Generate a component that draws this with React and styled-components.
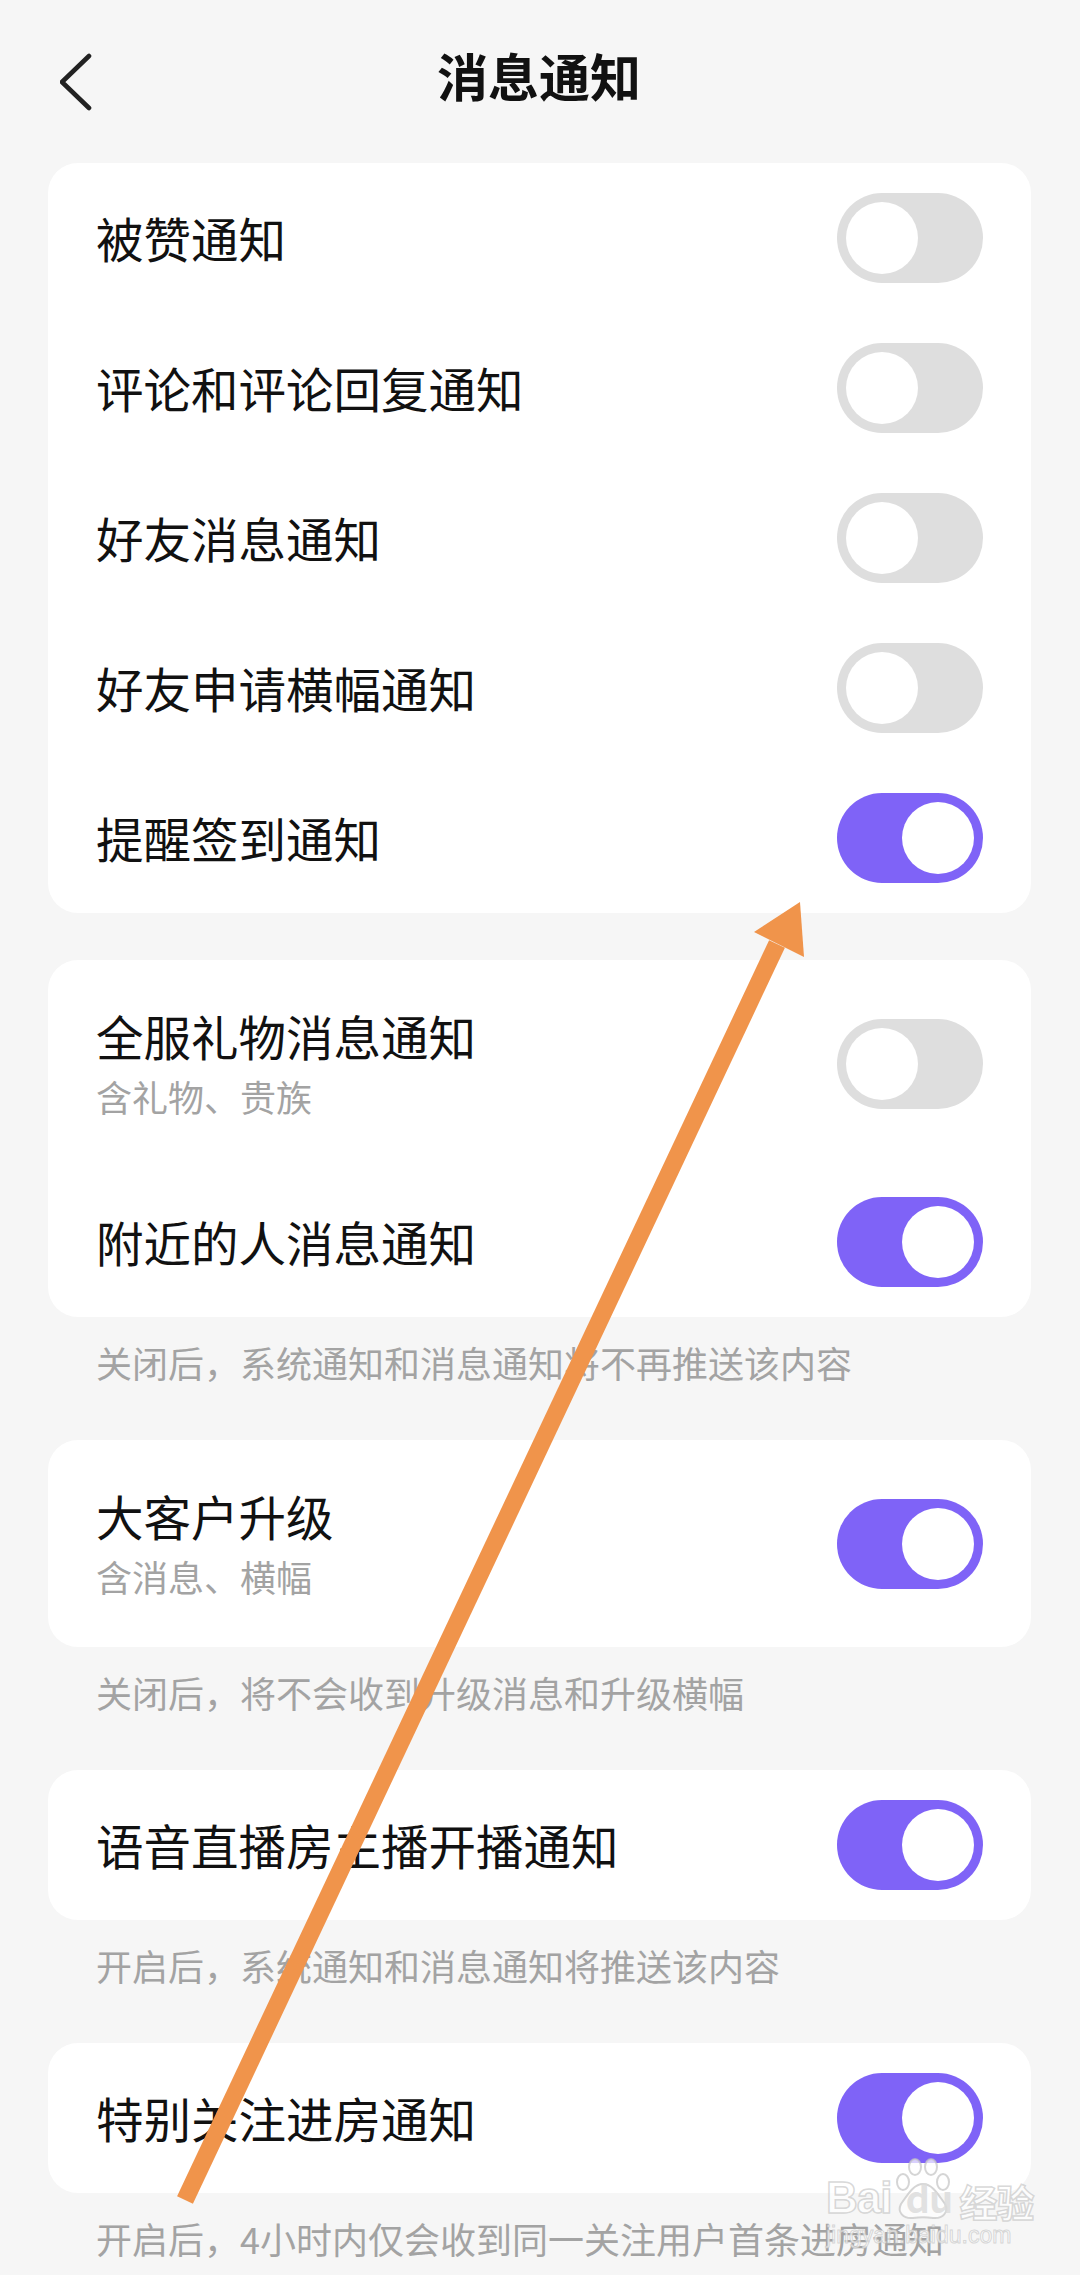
import React from 'react'
import styled, { createGlobalStyle } from 'styled-components'

const GlobalStyle = createGlobalStyle`
  html, body {
    margin: 0;
    padding: 0;
    background: #f6f6f6;
  }
  body {
    font-family: "Noto Sans CJK SC", "Noto Sans", sans-serif;
    -webkit-font-smoothing: antialiased;
  }
`

const sections = [
  {
    rows: [
      { title: '被赞通知', on: false },
      { title: '评论和评论回复通知', on: false },
      { title: '好友消息通知', on: false },
      { title: '好友申请横幅通知', on: false },
      { title: '提醒签到通知', on: true },
    ],
  },
  {
    rows: [
      { title: '全服礼物消息通知', sub: '含礼物、贵族', on: false },
      { title: '附近的人消息通知', on: true },
    ],
    note: '关闭后，系统通知和消息通知将不再推送该内容',
  },
  {
    rows: [{ title: '大客户升级', sub: '含消息、横幅', on: true }],
    note: '关闭后，将不会收到升级消息和升级横幅',
  },
  {
    rows: [{ title: '语音直播房主播开播通知', on: true }],
    note: '开启后，系统通知和消息通知将推送该内容',
  },
  {
    rows: [{ title: '特别关注进房通知', on: true }],
    note: '开启后，4小时内仅会收到同一关注用户首条进房通知',
  },
]

function App() {
  return (
    <Page>
      <GlobalStyle />
      <Header>
        <BackButton aria-label="返回">
          <svg width="40" height="62" viewBox="0 0 40 62">
            <polyline points="29,4 2,30 29,56" fill="none" stroke="#222" strokeWidth="4.6" strokeLinecap="round" strokeLinejoin="round" />
          </svg>
        </BackButton>
        <Title>消息通知</Title>
      </Header>

      <List>
        {sections.map((s, i) => (
          <Section key={i}>
            <Card>
              {s.rows.map((r) => (
                <Row key={r.title} $tall={!!r.sub}>
                  <Label>
                    <RowTitle>{r.title}</RowTitle>
                    {r.sub && <RowSub>{r.sub}</RowSub>}
                  </Label>
                  <Toggle $on={r.on}>
                    <Knob />
                  </Toggle>
                </Row>
              ))}
            </Card>
            {s.note && <Note>{s.note}</Note>}
          </Section>
        ))}
      </List>

      {/* annotation drawn over the screenshot */}
      <Overlay viewBox="0 0 1080 2275" width="1080" height="2275">
        <line x1="185" y1="2200" x2="777" y2="944" stroke="#f0944b" strokeWidth="17.5" />
        <polygon points="800,902 754,932 804,957" fill="#f0944b" />
      </Overlay>

      <Watermark>
        <MarkLine>
          <span>Bai</span>
          <Paw>
            <svg width="60" height="62" viewBox="0 0 60 62">
              <g fill="rgba(255,255,255,0.7)" stroke="rgba(195,195,195,0.7)" strokeWidth="2">
                <ellipse cx="10" cy="24" rx="6" ry="8" />
                <ellipse cx="22" cy="9" rx="6" ry="8" />
                <ellipse cx="38" cy="9" rx="6" ry="8" />
                <ellipse cx="50" cy="24" rx="6" ry="8" />
                <path d="M30 26 C20 26 14 38 8 46 C4 54 10 61 20 60 C26 59 34 59 40 60 C50 61 56 54 52 46 C46 38 40 26 30 26 Z" />
              </g>
            </svg>
            <PawText>du</PawText>
          </Paw>
          <span>经验</span>
        </MarkLine>
        <MarkUrl>jingyan.baidu.com</MarkUrl>
      </Watermark>
    </Page>
  )
}

export default App

const Page = styled.div`
  position: relative;
  width: 1080px;
  min-height: 2275px;
  background: #f6f6f6;
  overflow: hidden;
`

const Header = styled.header`
  height: 150px;
  display: flex;
  align-items: center;
  justify-content: center;
  position: relative;
`

const BackButton = styled.button`
  position: absolute;
  left: 60px;
  top: 52px;
  border: none;
  background: none;
  padding: 0;
  display: flex;
`

const Title = styled.h1`
  margin: 0 0 0 -2px;
  font-size: 51px;
  font-weight: 700;
  color: #111;
  line-height: 1;
`

const List = styled.main`
  padding: 13px 49px 0 48px;
  display: flex;
  flex-direction: column;
  gap: 47px;
`

const Section = styled.section`
  display: flex;
  flex-direction: column;
`

const Card = styled.div`
  background: #fff;
  border-radius: 30px;
  padding: 0 48px;
  display: flex;
  flex-direction: column;
`

const Row = styled.div`
  height: ${(p) => (p.$tall ? '207px' : '150px')};
  display: flex;
  align-items: center;
  justify-content: space-between;
`

const Label = styled.div`
  display: flex;
  flex-direction: column;
  gap: 9px;
`

const RowTitle = styled.div`
  font-size: 47.5px;
  line-height: 56px;
  color: #111;
`

const RowSub = styled.div`
  font-size: 36px;
  line-height: 46px;
  color: #a3a3a3;
`

const Toggle = styled.div`
  width: 146px;
  height: 90px;
  box-sizing: border-box;
  padding: 9px;
  border-radius: 45px;
  background: ${(p) => (p.$on ? '#7f63f7' : '#dedede')};
  display: flex;
  justify-content: ${(p) => (p.$on ? 'flex-end' : 'flex-start')};
  align-items: center;
`

const Knob = styled.div`
  width: 72px;
  height: 72px;
  border-radius: 50%;
  background: #fff;
`

const Note = styled.p`
  margin: 0;
  padding: 20px 48px 6px;
  font-size: 36px;
  line-height: 50px;
  color: #a3a3a3;
`

const Overlay = styled.svg`
  position: absolute;
  left: 0;
  top: 0;
  pointer-events: none;
`

const Watermark = styled.div`
  position: absolute;
  left: 826px;
  top: 2158px;
  display: flex;
  flex-direction: column;
  align-items: flex-start;
  pointer-events: none;
  font-family: "Liberation Sans", Arial, sans-serif;
  color: rgba(255, 255, 255, 0.7);
  -webkit-text-stroke: 1.5px rgba(195, 195, 195, 0.65);
`

const MarkLine = styled.div`
  display: flex;
  align-items: flex-end;
  font-size: 44px;
  font-weight: 700;
  line-height: 1;
  letter-spacing: -1px;
  span {
    display: block;
  }
  span:last-child {
    font-family: "Noto Sans CJK SC", sans-serif;
    font-size: 38px;
    margin-left: 4px;
  }
`

const Paw = styled.div`
  position: relative;
  width: 60px;
  height: 62px;
  margin: 0 2px;
`

const PawText = styled.span`
  position: absolute;
  left: 8px;
  bottom: 4px;
  font-size: 30px;
  font-weight: 700;
  color: rgba(220, 220, 220, 0.85);
  -webkit-text-stroke: 0;
`

const MarkUrl = styled.div`
  font-size: 23px;
  line-height: 26px;
  margin-top: 2px;
  letter-spacing: 0;
  -webkit-text-stroke: 1px rgba(195, 195, 195, 0.65);
`
